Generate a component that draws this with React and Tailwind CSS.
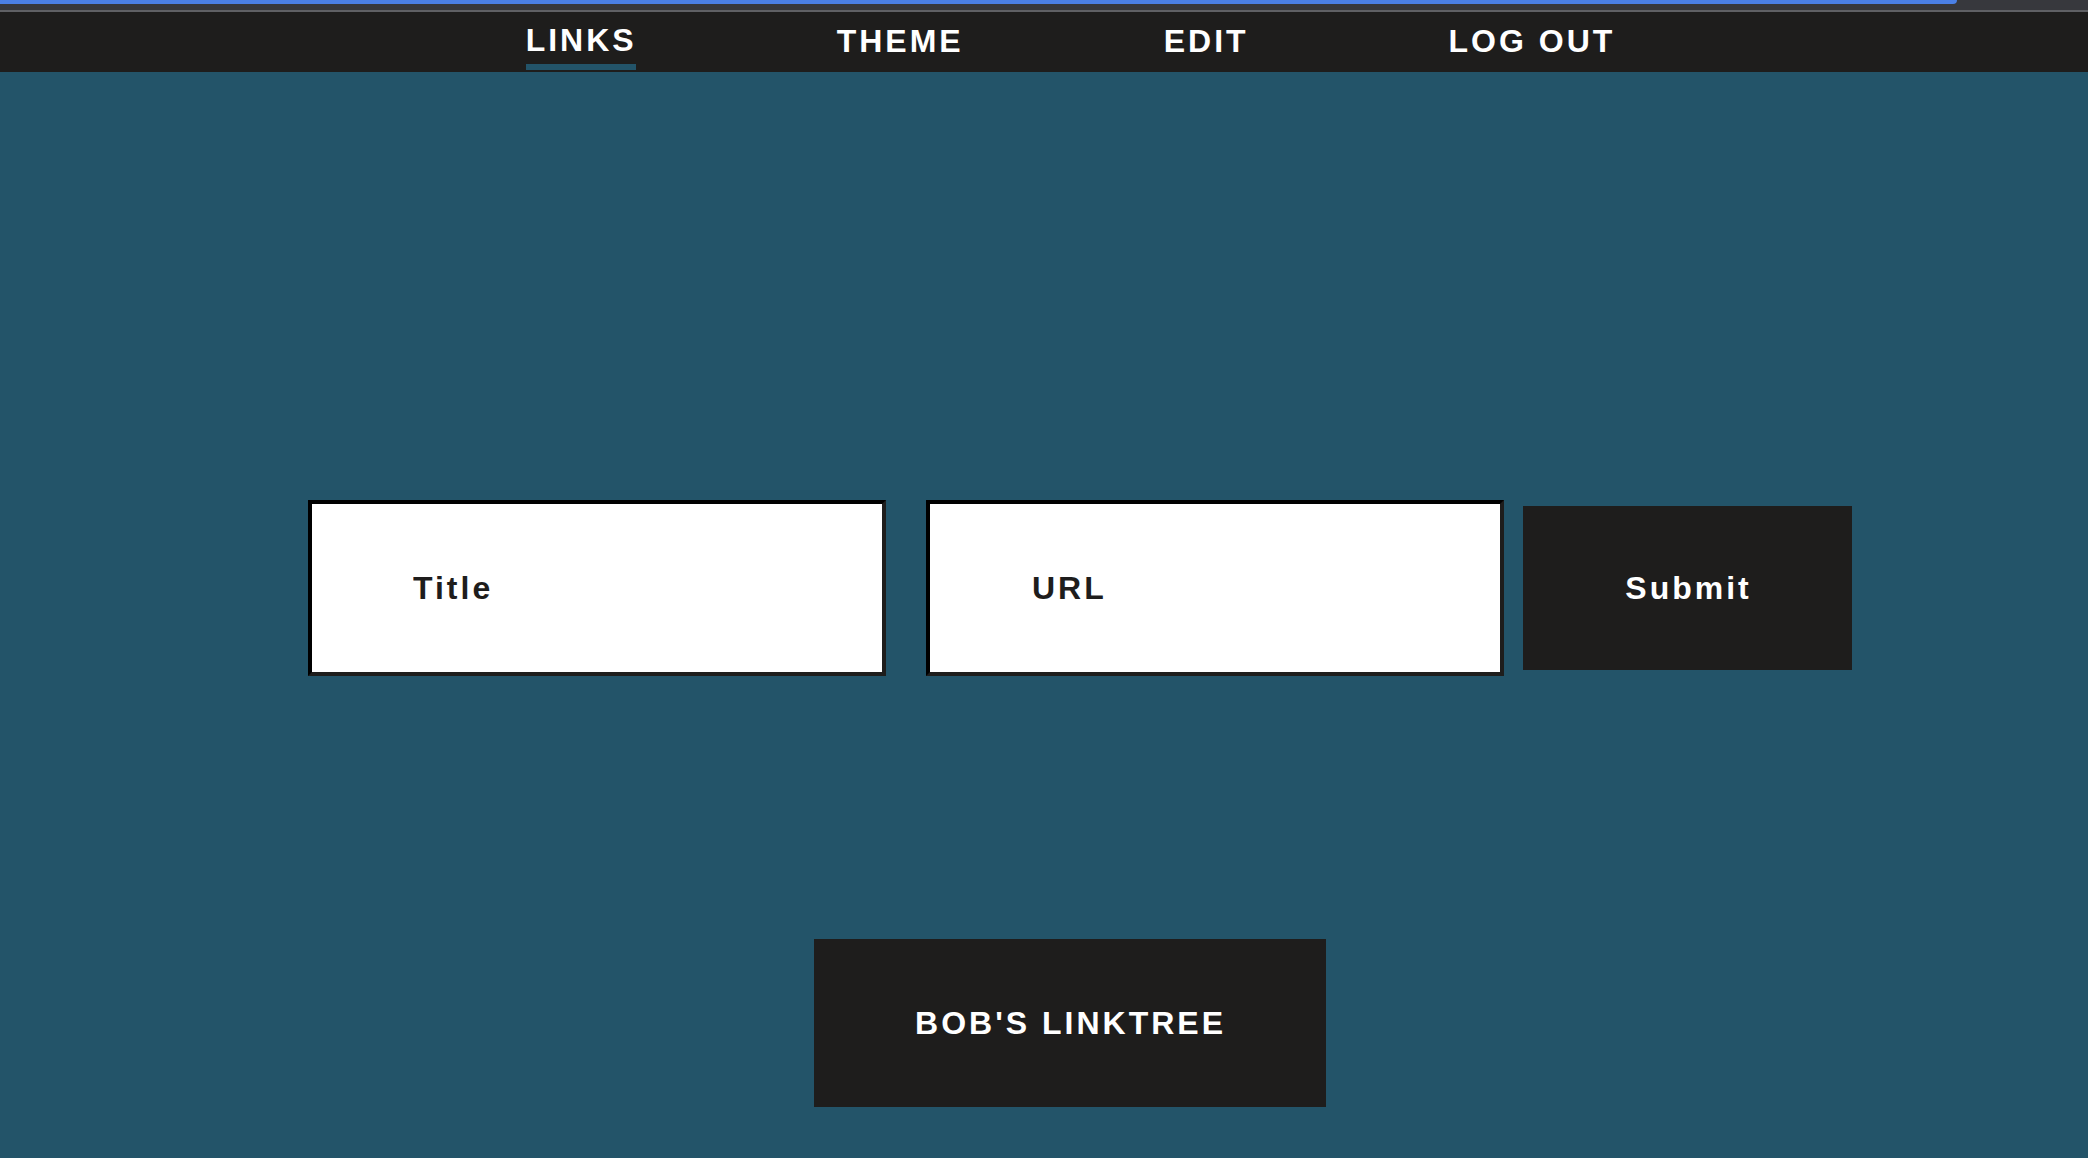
import React, { useState } from "react";

const font = { fontFamily: '"Liberation Sans", Arial, sans-serif' };

export default function App() {
  const [active, setActive] = useState("LINKS");
  const [title, setTitle] = useState("");
  const [url, setUrl] = useState("");

  const tabs = ["LINKS", "THEME", "EDIT", "LOG OUT"];

  return (
    <div className="min-h-[1158px] w-full flex flex-col bg-[#235469]" style={font}>
      {/* top loading strip */}
      <div className="h-[10px] bg-[#37383d]">
        <div className="h-[4px] w-[1957px] bg-[#4b80e6] rounded-br-[6px]" />
      </div>
      <div className="h-[2px] bg-[#5f6064]" />

      {/* nav */}
      <nav className="h-[60px] bg-[#1e1d1c] flex justify-center pl-[53px] gap-[200px]">
        {tabs.map((t) => (
          <button
            key={t}
            onClick={() => setActive(t)}
            className={
              "relative flex flex-col items-start text-white font-bold text-[32px] leading-none tracking-[3px] " +
              (active === t ? "pt-[12px]" : "pt-[13px]")
            }
          >
            {t}
            {active === t && (
              <span className="absolute left-0 top-[52px] h-[6px] w-[110px] bg-[#235469]" />
            )}
          </button>
        ))}
      </nav>

      <main className="flex flex-col pt-[428px]">
        <div className="flex items-center justify-center pl-[72px]">
          <input
            value={title}
            onChange={(e) => setTitle(e.target.value)}
            placeholder="Title"
            className="w-[578px] h-[176px] bg-white border-4 border-t-black border-l-black border-b-[#1e1d1c] border-r-[#1e1d1c] pl-[101px] text-[32px] font-bold tracking-[3px] text-[#1e1d1c] placeholder:text-[#1e1d1c] outline-none"
            style={font}
          />
          <input
            value={url}
            onChange={(e) => setUrl(e.target.value)}
            placeholder="URL"
            className="ml-[40px] w-[578px] h-[176px] bg-white border-4 border-t-black border-l-black border-b-[#1e1d1c] border-r-[#1e1d1c] pl-[102px] text-[32px] font-bold tracking-[3px] text-[#1e1d1c] placeholder:text-[#1e1d1c] outline-none"
            style={font}
          />
          <button className="ml-[19px] w-[329px] h-[164px] bg-[#1e1d1c] text-white text-[32px] font-bold tracking-[3px] pl-[2px]">
            Submit
          </button>
        </div>

        <div className="flex justify-center pl-[52px] mt-[263px]">
          <button className="w-[512px] h-[168px] bg-[#1e1d1c] text-white text-[32px] font-bold tracking-[3px] pl-[1px]">
            BOB'S LINKTREE
          </button>
        </div>
      </main>
    </div>
  );
}
